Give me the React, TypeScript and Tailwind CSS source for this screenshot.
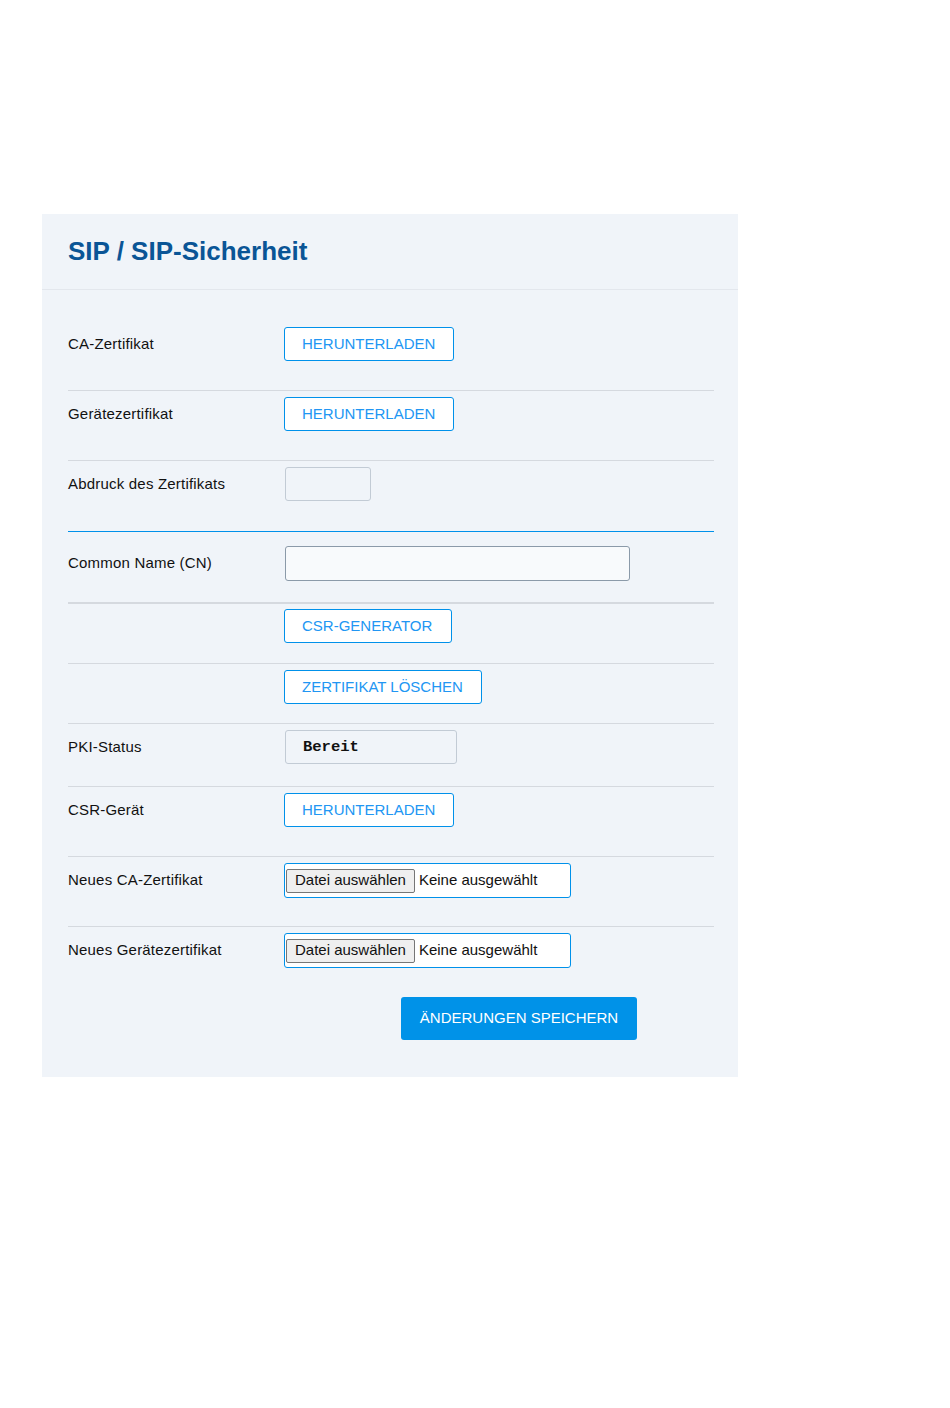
import React from "react";

const font = { fontFamily: '"Liberation Sans", Arial, sans-serif' };

function OutlineButton({ children, width }: { children: React.ReactNode; width: string }) {
    return (
        <button
            className={`${width} h-[34px] rounded-[3px] border border-[#0091ea] bg-white pl-[17px] text-left text-[15px] uppercase text-[#2196f3]`}
        >
            {children}
        </button>
    );
}

function FileField() {
    return (
        <div className="flex h-[35px] w-[287px] items-center rounded-[3px] border border-[#0091ea] bg-white pl-[1px]">
            <span className="flex h-[24px] items-center rounded-[2px] border border-[#767676] bg-[#efefef] px-[8px] text-[15px] text-[#111]">
                Datei auswählen
            </span>
            <span className="ml-[4px] text-[15px] text-[#111]">Keine ausgewählt</span>
        </div>
    );
}

function Row({
    label,
    height,
    children,
}: {
    label?: string;
    height: string;
    children: React.ReactNode;
}) {
    return (
        <div className={`${height} flex items-start pt-[6px]`}>
            <div className="flex min-h-[34px] w-[216px] items-center text-[15px] tracking-[0.2px] text-[#111]">
                {label}
            </div>
            <div>{children}</div>
        </div>
    );
}

const Divider = () => <div className="h-px bg-[#d5d9df]" />;

export default function App() {
    return (
        <div className="min-h-[1408px] bg-white pt-[214px] pl-[42px]" style={font}>
            <div className="w-[696px] bg-[#f0f4f9] pb-[37px]">
                {/* Header */}
                <div className="flex h-[76px] items-center border-b border-[#e3e7ed] pl-[26px]">
                    <h1 className="text-[26px] font-bold text-[#0a5596]">SIP / SIP-Sicherheit</h1>
                </div>

                <div className="pl-[26px] pr-[24px] pt-[31px]">
                    <Row label="CA-Zertifikat" height="h-[69px]">
                        <OutlineButton width="w-[170px]">Herunterladen</OutlineButton>
                    </Row>
                    <Divider />
                    <Row label="Gerätezertifikat" height="h-[69px]">
                        <OutlineButton width="w-[170px]">Herunterladen</OutlineButton>
                    </Row>
                    <Divider />
                    <Row label="Abdruck des Zertifikats" height="h-[70px]">
                        <div className="ml-[1px] h-[34px] w-[86px] rounded-[3px] border border-[#c2cbd5]" />
                    </Row>
                    <div className="border-t border-[#0091ea]" />

                    {/* Common Name */}
                    <div className="flex h-[70px] items-start pt-[14px]">
                        <div className="flex h-[35px] w-[216px] items-center text-[15px] tracking-[0.2px] text-[#111]">
                            Common Name (CN)
                        </div>
                        <input
                            className="ml-[1px] h-[35px] w-[345px] rounded-[3px] border border-[#8b9aa9] bg-[#f8fafc] outline-none"
                            style={font}
                        />
                    </div>
                    <div className="h-[2px] bg-[#d5d9df]" />

                    <Row height="h-[59px]">
                        <div className="-mt-[1px]">
                            <OutlineButton width="w-[168px]">CSR-Generator</OutlineButton>
                        </div>
                    </Row>
                    <Divider />
                    <Row height="h-[59px]">
                        <OutlineButton width="w-[198px]">Zertifikat löschen</OutlineButton>
                    </Row>
                    <Divider />
                    <Row label="PKI-Status" height="h-[62px]">
                        <div
                            className="ml-[1px] flex h-[34px] w-[172px] items-center rounded-[3px] border border-[#c2cbd5] pl-[17px] pt-[2px] text-[15.5px] font-bold text-[#111]"
                            style={{ fontFamily: '"Liberation Mono", "Courier New", monospace' }}
                        >
                            Bereit
                        </div>
                    </Row>
                    <Divider />
                    <Row label="CSR-Gerät" height="h-[69px]">
                        <OutlineButton width="w-[170px]">Herunterladen</OutlineButton>
                    </Row>
                    <Divider />
                    <Row label="Neues CA-Zertifikat" height="h-[69px]">
                        <FileField />
                    </Row>
                    <Divider />
                    <Row label="Neues Gerätezertifikat" height="h-[70px]">
                        <FileField />
                    </Row>

                    <div className="pl-[333px]">
                        <button className="h-[43px] w-[236px] rounded-[3px] bg-[#0092e8] text-[15px] uppercase text-white">
                            Änderungen speichern
                        </button>
                    </div>
                </div>
            </div>
        </div>
    );
}
